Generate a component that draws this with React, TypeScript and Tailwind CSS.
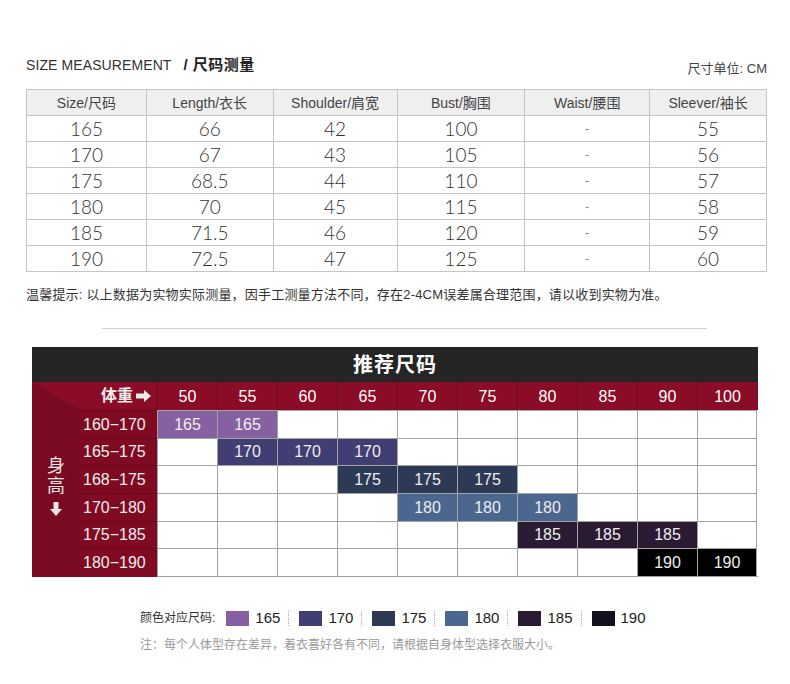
import React from "react";

const cols = [
  { label: "Size/尺码", w: "w-[120px]" },
  { label: "Length/衣长", w: "w-[127px]" },
  { label: "Shoulder/肩宽", w: "w-[124px]" },
  { label: "Bust/胸围", w: "w-[128px]" },
  { label: "Waist/腰围", w: "w-[125px]" },
  { label: "Sleever/袖长", w: "w-[117px]" },
];

const rows = [
  ["165", "66", "42", "100", "-", "55"],
  ["170", "67", "43", "105", "-", "56"],
  ["175", "68.5", "44", "110", "-", "57"],
  ["180", "70", "45", "115", "-", "58"],
  ["185", "71.5", "46", "120", "-", "59"],
  ["190", "72.5", "47", "125", "-", "60"],
];

const weights = ["50", "55", "60", "65", "70", "75", "80", "85", "90", "100"];

const sizeColors: Record<string, string> = {
  "165": "bg-[#8661a2]",
  "170": "bg-[#413e74]",
  "175": "bg-[#2c3a55]",
  "180": "bg-[#4b6790]",
  "185": "bg-[#2a1b33]",
  "190": "bg-[#000000]",
};

// [height range, row height, first col index, last col index, size]
const chart: [string, string, number, number, string][] = [
  ["160-170", "h-[28px]", 0, 1, "165"],
  ["165-175", "h-[27px]", 1, 3, "170"],
  ["168-175", "h-[28px]", 3, 5, "175"],
  ["170-180", "h-[28px]", 4, 6, "180"],
  ["175-185", "h-[27px]", 6, 8, "185"],
  ["180-190", "h-[28px]", 8, 9, "190"],
];

const legend = [
  { s: "165", c: "bg-[#8661a2]" },
  { s: "170", c: "bg-[#413e74]" },
  { s: "175", c: "bg-[#2c3a55]" },
  { s: "180", c: "bg-[#4b6790]" },
  { s: "185", c: "bg-[#2a1b33]" },
  { s: "190", c: "bg-[#12121e]" },
];

const font = "font-['Liberation_Sans','Noto_Sans_CJK_SC',sans-serif]";
const light = "font-['Lato','Noto_Sans_CJK_SC',sans-serif] font-light";

const App = () => {
  return (
    <div className={`w-[790px] h-[684px] bg-white ${font} text-[#333]`}>
      {/* size measurement */}
      <div className="px-[26px] pt-[55px] w-[793px]">
        <div className="flex items-end justify-between">
          <div className="flex items-center h-[20px]">
            <span className="text-[14px] text-[#333] tracking-[0.1px]">SIZE MEASUREMENT</span>
            <span className="ml-[12px] text-[15px] font-bold text-[#222] tracking-[0.5px]">/ 尺码测量</span>
          </div>
          <span className="text-[13px] text-[#444] mb-[-3px]">尺寸单位: CM</span>
        </div>

        <table className="mt-[14px] border-collapse">
          <thead>
            <tr className="h-[26px] bg-[#efefef]">
              {cols.map((c) => (
                <th key={c.label} className={`${c.w} h-[26px] border border-[#c4c4c4] text-[14px] leading-[16px] font-normal text-[#444] p-0`}>
                  {c.label}
                </th>
              ))}
            </tr>
          </thead>
          <tbody>
            {rows.map((r) => (
              <tr key={r[0]} className="h-[26px]">
                {r.map((v, i) => (
                  <td key={i} className={`h-[26px] border border-[#c4c4c4] text-center p-0 leading-[20px] ${v === "-" ? "text-[13px] text-[#888]" : `text-[19px] ${light} text-[#333]`}`}>
                    {v}
                  </td>
                ))}
              </tr>
            ))}
          </tbody>
        </table>

        <p className="mt-[14px] text-[13px] leading-[18px] text-[#333] tracking-[0.2px]">
          温馨提示: 以上数据为实物实际测量，因手工测量方法不同，存在2-4CM误差属合理范围，请以收到实物为准。
        </p>
      </div>

      <div className="ml-[102px] mt-[24px] w-[605px] h-px bg-[#d0d0d0]" />

      {/* recommended size chart */}
      <div className="ml-[32px] mt-[18px] w-[726px]">
        <div className="h-[35px] bg-[#252525] flex items-center justify-center">
          <span className="text-[20px] font-bold text-white tracking-[1px]">推荐尺码</span>
        </div>

        <div className="flex">
          {/* left column */}
          <div className="w-[48px] flex flex-col">
            <div className="h-[28px] relative bg-[#8b0c26]">
              <svg className="absolute inset-0" width="48" height="28" viewBox="0 0 48 28">
                <polygon points="0,0 48,28 0,28" fill="#790a21" />
              </svg>
            </div>
            <div className="flex-1 bg-[#790a21] flex flex-col items-center pt-[46px] text-[#e6e6e6]">
              <span className="text-[18px] leading-[20px]">身</span>
              <span className="text-[18px] leading-[20px]">高</span>
              <svg className="mt-[6px]" width="12" height="14" viewBox="0 0 12 14">
                <path d="M3.5 0h5v7h3.5L6 14 0 7h3.5z" fill="#e6e6e6" />
              </svg>
            </div>
          </div>

          <div className="flex-1 flex flex-col">
            {/* weight header */}
            <div className="h-[28px] flex bg-[#8b0c26] text-white">
              <div className="w-[77px] flex items-center justify-end pr-[6px] gap-[3px] text-[#ececec]">
                <span className="text-[16px] font-bold">体重</span>
                <svg width="15" height="12" viewBox="0 0 15 12">
                  <path d="M0 3.5h8V0l7 6-7 6V8.5H0z" fill="#ececec" />
                </svg>
              </div>
              {weights.map((w) => (
                <div key={w} className="w-[60px] border-l border-[#6e0a1e] flex items-center justify-center text-[16px] pt-[1px]">
                  {w}
                </div>
              ))}
            </div>

            {chart.map(([range, h, a, b, size]) => (
              <div key={range} className={`${h} flex`}>
                <div className="w-[77px] bg-[#7f0a22] border-t border-[#680818] flex items-center pl-[3px] text-[16px] text-[#eee]">
                  {range.replace("-", "−")}
                </div>
                {weights.map((w, i) => {
                  const on = i >= a && i <= b;
                  return (
                    <div
                      key={w}
                      className={`w-[60px] border-l border-t border-[#a3a3a3] ${i === 9 ? "border-r" : ""} flex items-center justify-center text-[16px] text-[#eee] ${on ? sizeColors[size] : "bg-white"}`}
                    >
                      {on ? size : ""}
                    </div>
                  );
                })}
              </div>
            ))}
            <div className="h-px flex">
              <div className="w-[77px] bg-[#7f0a22]" />
              <div className="w-[601px] bg-[#a3a3a3]" />
            </div>
          </div>
        </div>
      </div>

      {/* legend */}
      <div className="ml-[140px] mt-[33px] flex items-center h-[16px]">
        <span className="text-[12px] text-[#333] mr-[11px]">颜色对应尺码:</span>
        {legend.map((l, i) => (
          <div key={l.s} className="flex items-center">
            <div className={`w-[23px] h-[15px] ${l.c}`} />
            <span className="ml-[6px] text-[15px] text-[#222]">{l.s}</span>
            {i < legend.length - 1 && (
              <div className="ml-[8px] mr-[10px] h-[15px] border-l border-dotted border-[#aaa]" />
            )}
          </div>
        ))}
      </div>
      <p className="ml-[140px] mt-[10px] text-[12px] text-[#999]">
        注：每个人体型存在差异，着衣喜好各有不同，请根据自身体型选择衣服大小。
      </p>
    </div>
  );
};

export default App;
